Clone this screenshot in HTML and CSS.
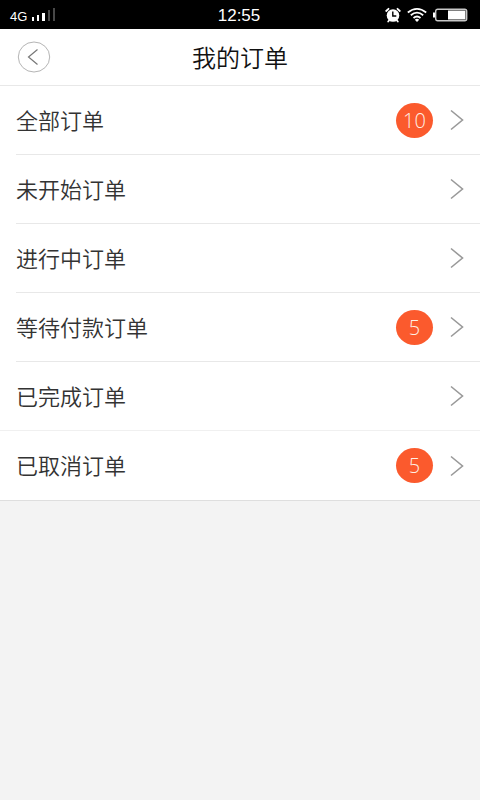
FILE: index.html
```html
<!DOCTYPE html>
<html lang="zh-CN">
<head>
<meta charset="utf-8">
<meta name="viewport" content="width=device-width, initial-scale=1">
<title>我的订单</title>
<link rel="stylesheet" href="styles.css">
</head>
<body>
<div class="status">
  <div class="status-left">
    <span class="network">4G</span>
    <svg class="signal" width="26" height="18" viewBox="0 0 26 18" aria-hidden="true">
      <path fill="#fff" d="M1 11h2v4H1zM6 9h2v6H6zM11 7h3v8h-3z"/>
      <path fill="#484848" d="M17 4h2v11h-2zM22 2h2v13h-2z"/>
    </svg>
  </div>
  <time class="clock">12:55</time>
  <div class="status-right">
    <svg width="16" height="16" viewBox="0 0 16 16" aria-hidden="true">
      <circle cx="8" cy="8.500" r="6.300" fill="#fff"/>
      <path d="M1.200 4 3.500 1.800M14.800 4 12.500 1.800M4 13.500 3.200 14.500M12 13.500 12.800 14.500" stroke="#fff" stroke-width="1.800" stroke-linecap="round"/>
      <path d="M7.800 4.500v4.500h3.500" fill="none" stroke="#000" stroke-width="1.400"/>
    </svg>
    <svg width="20" height="16" viewBox="0 0 20 16" aria-hidden="true">
      <g fill="none" stroke="#fff" stroke-width="1.800">
        <path d="M0.800 5.500Q10-1.700 19.200 5.500"/>
        <path d="M3.800 8.300Q10 3 16.200 8.300"/>
        <path d="M6.500 11Q10 8 13.500 11"/>
      </g>
      <path fill="#fff" d="M7.800 12.700Q10 11 12.200 12.700L10 15z"/>
    </svg>
    <svg width="35" height="14" viewBox="0 0 35 14" aria-hidden="true">
      <rect x="2.700" y="1.200" width="31" height="11.600" rx="2" fill="none" stroke="#c8c8c8" stroke-width="1.400"/>
      <path fill="#fff" d="M0 4.500h2v5H0zM15 2.500h17.500v9H15z"/>
    </svg>
  </div>
</div>

<header class="header">
  <button class="back" type="button" aria-label="返回">
    <svg width="34" height="32" viewBox="0 0 34 32" aria-hidden="true">
      <ellipse cx="17" cy="16" rx="15.700" ry="15" fill="none" stroke="#b5b5b5"/>
      <path d="M20.500 8.500 11.500 16l9 7.500" fill="none" stroke="#777" stroke-width="1.200"/>
    </svg>
  </button>
  <h1 class="title">我的订单</h1>
</header>

<main>
  <ul class="orders">
    <li class="order"><a class="link" href="#all"><span class="label">全部订单</span><span class="badge">10</span><svg class="arrow" width="14" height="22" viewBox="0 0 14 22" aria-hidden="true"><path d="M1 1.500 12.500 11 1 20.500"/></svg></a></li>
    <li class="order"><a class="link" href="#pending"><span class="label">未开始订单</span><svg class="arrow" width="14" height="22" viewBox="0 0 14 22" aria-hidden="true"><path d="M1 1.500 12.500 11 1 20.500"/></svg></a></li>
    <li class="order"><a class="link" href="#active"><span class="label">进行中订单</span><svg class="arrow" width="14" height="22" viewBox="0 0 14 22" aria-hidden="true"><path d="M1 1.500 12.500 11 1 20.500"/></svg></a></li>
    <li class="order"><a class="link" href="#unpaid"><span class="label">等待付款订单</span><span class="badge">5</span><svg class="arrow" width="14" height="22" viewBox="0 0 14 22" aria-hidden="true"><path d="M1 1.500 12.500 11 1 20.500"/></svg></a></li>
    <li class="order order-full"><a class="link" href="#done"><span class="label">已完成订单</span><svg class="arrow" width="14" height="22" viewBox="0 0 14 22" aria-hidden="true"><path d="M1 1.500 12.500 11 1 20.500"/></svg></a></li>
    <li class="order order-full"><a class="link" href="#cancelled"><span class="label">已取消订单</span><span class="badge">5</span><svg class="arrow" width="14" height="22" viewBox="0 0 14 22" aria-hidden="true"><path d="M1 1.500 12.500 11 1 20.500"/></svg></a></li>
  </ul>
</main>
</body>
</html>
```

FILE: styles.css
```css
* {
  box-sizing: border-box;
}

body {
  margin: 0;
  background: #f3f3f3;
  color: #333;
  font-family: "Liberation Sans", "Noto Sans CJK SC", sans-serif;
}

svg {
  display: block;
}

.status {
  display: grid;
  grid-template-columns: 1fr auto 1fr;
  align-items: center;
  height: 29px;
  padding: 0 12px 0 10px;
  background: #000;
  color: #fff;
}

.status-left,
.status-right {
  display: flex;
  align-items: center;
  gap: 4px;
}

.status-right {
  justify-content: flex-end;
  gap: 6px;
}

.network {
  padding-top: 4px;
  font-size: 13px;
  line-height: 14px;
}

.clock {
  padding-top: 2px;
  font-size: 17px;
  line-height: 27px;
}

.header {
  display: grid;
  grid-template-columns: 1fr auto 1fr;
  align-items: center;
  height: 57px;
  padding: 0 17px;
  border-bottom: 1px solid #e8e8e8;
  background: #fff;
}

.back {
  justify-self: start;
  padding: 0;
  border: 0;
  background: none;
  cursor: pointer;
}

.title {
  margin: 0;
  color: #111;
  font-family: "Noto Sans CJK SC", sans-serif;
  font-size: 24px;
  font-weight: 350;
  line-height: 36px;
}

.orders {
  margin: 0;
  padding: 0;
  border-bottom: 1px solid #dedede;
  background: #fff;
  list-style: none;
}

.order {
  padding-left: 16px;
}

.link {
  display: flex;
  align-items: center;
  height: 69px;
  padding-right: 16px;
  border-bottom: 1px solid #e8e8e8;
  color: inherit;
  text-decoration: none;
}

.order-full {
  padding-left: 0;
}

.order-full .link {
  padding-left: 16px;
}

.order:nth-child(5) .link {
  border-color: #f0f0f0;
}

.order:last-child .link {
  border-bottom: 0;
}

.label {
  flex: 1;
  padding-bottom: 3px;
  font-family: "Noto Sans CJK SC", sans-serif;
  font-size: 22px;
  font-weight: 350;
  line-height: 32px;
}

.badge {
  width: 37px;
  height: 35px;
  margin-right: 17px;
  border-radius: 50%;
  background: #fb5a2d;
  color: #fff0e6;
  font-family: "Open Sans", sans-serif;
  font-size: 20px;
  font-weight: 300;
  line-height: 35px;
  text-align: center;
}

.arrow path {
  fill: none;
  stroke: #999;
  stroke-width: 1.6;
}
```
